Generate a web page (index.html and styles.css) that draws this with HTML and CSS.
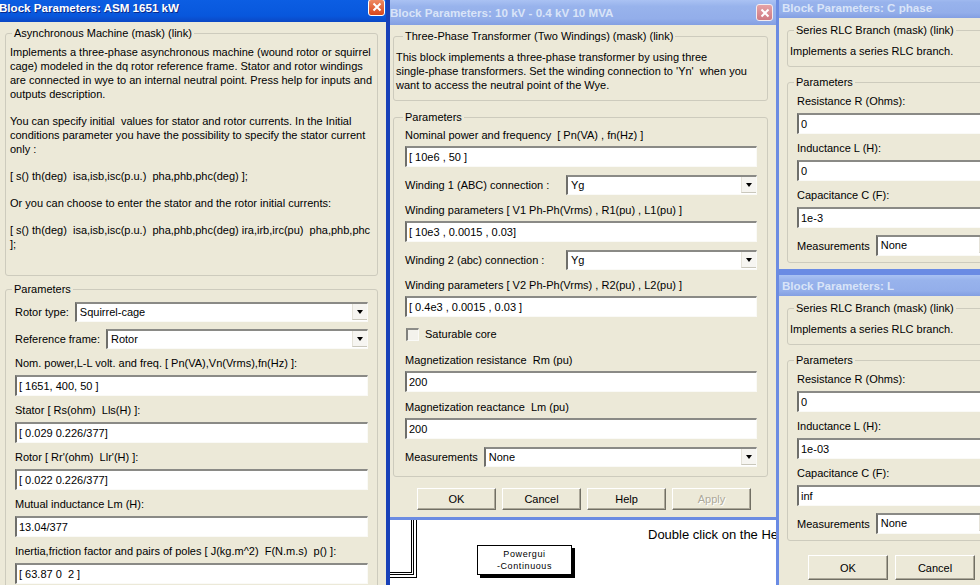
FILE: index.html
```html
<!DOCTYPE html>
<html lang="en">
<head>
    <meta charset="UTF-8">
    <title>Block Parameters</title>
    <link rel="stylesheet" href="styles.css">
</head>
<body>
<div class="desktop">

    <!-- simulink model behind the dialogs -->
    <div class="canvas">
        <div class="subsys"></div>
        <div class="note">Double click on the He</div>
        <div class="powergui">Powergui<br>-Continuous</div>
    </div>

    <!-- Series RLC: C phase -->
    <div class="win win-rlc win-c">
        <div class="titlebar">
            <span class="title">Block Parameters: C phase</span>
        </div>
        <div class="win-body">
            <div class="group group-mask">
                <div class="group-title">Series RLC Branch (mask) (link)</div>
                <p class="desc">Implements a series RLC branch.</p>
            </div>
            <div class="group group-params">
                <div class="group-title">Parameters</div>
                <div class="form">
                    <div class="field">
                        <label>Resistance R (Ohms):</label>
                        <div class="edit">0</div>
                    </div>
                    <div class="field">
                        <label>Inductance L (H):</label>
                        <div class="edit">0</div>
                    </div>
                    <div class="field">
                        <label>Capacitance C (F):</label>
                        <div class="edit">1e-3</div>
                    </div>
                    <div class="row">
                        <label>Measurements</label>
                        <div class="combo"><span>None</span><i class="drop"></i></div>
                    </div>
                </div>
            </div>
        </div>
    </div>

    <!-- Series RLC: L -->
    <div class="win win-rlc win-l">
        <div class="titlebar">
            <span class="title">Block Parameters: L</span>
        </div>
        <div class="win-body">
            <div class="group group-mask">
                <div class="group-title">Series RLC Branch (mask) (link)</div>
                <p class="desc">Implements a series RLC branch.</p>
            </div>
            <div class="group group-params">
                <div class="group-title">Parameters</div>
                <div class="form">
                    <div class="field">
                        <label>Resistance R (Ohms):</label>
                        <div class="edit">0</div>
                    </div>
                    <div class="field">
                        <label>Inductance L (H):</label>
                        <div class="edit">1e-03</div>
                    </div>
                    <div class="field">
                        <label>Capacitance C (F):</label>
                        <div class="edit">inf</div>
                    </div>
                    <div class="row">
                        <label>Measurements</label>
                        <div class="combo"><span>None</span><i class="drop"></i></div>
                    </div>
                </div>
            </div>
            <div class="buttons">
                <button class="btn">OK</button>
                <button class="btn">Cancel</button>
            </div>
        </div>
    </div>

    <!-- Three-phase transformer -->
    <div class="win win-tr">
        <div class="titlebar">
            <span class="title">Block Parameters: 10 kV - 0.4 kV 10 MVA</span>
            <span class="close">
                <svg width="10" height="10" viewBox="0 0 10 10"><path d="M1.5 1.5 L8.5 8.5 M8.5 1.5 L1.5 8.5" stroke="#fff" stroke-width="2"/></svg>
            </span>
        </div>
        <div class="win-body">
            <div class="group group-mask">
                <div class="group-title">Three-Phase Transformer (Two Windings) (mask) (link)</div>
                <p class="desc">This block implements a three-phase transformer by using three<br>single-phase transformers. Set the winding connection to 'Yn'&nbsp; when you<br>want to access the neutral point of the Wye.</p>
            </div>
            <div class="group group-params">
                <div class="group-title">Parameters</div>
                <div class="form">
                    <div class="field">
                        <label>Nominal power and frequency&nbsp; [ Pn(VA) , fn(Hz) ]</label>
                        <div class="edit">[ 10e6 , 50 ]</div>
                    </div>
                    <div class="row">
                        <label class="wide">Winding 1 (ABC) connection :</label>
                        <div class="combo"><span>Yg</span><i class="drop"></i></div>
                    </div>
                    <div class="field">
                        <label>Winding parameters [ V1 Ph-Ph(Vrms) , R1(pu) , L1(pu) ]</label>
                        <div class="edit">[ 10e3 , 0.0015 , 0.03]</div>
                    </div>
                    <div class="row">
                        <label class="wide">Winding 2 (abc) connection :</label>
                        <div class="combo"><span>Yg</span><i class="drop"></i></div>
                    </div>
                    <div class="field">
                        <label>Winding parameters [ V2 Ph-Ph(Vrms) , R2(pu) , L2(pu) ]</label>
                        <div class="edit">[ 0.4e3 , 0.0015 , 0.03 ]</div>
                    </div>
                    <div class="check">
                        <i class="box"></i>
                        <label>Saturable core</label>
                    </div>
                    <div class="field">
                        <label>Magnetization resistance&nbsp; Rm (pu)</label>
                        <div class="edit">200</div>
                    </div>
                    <div class="field">
                        <label>Magnetization reactance&nbsp; Lm (pu)</label>
                        <div class="edit">200</div>
                    </div>
                    <div class="row">
                        <label>Measurements</label>
                        <div class="combo"><span>None</span><i class="drop"></i></div>
                    </div>
                </div>
            </div>
            <div class="buttons">
                <button class="btn">OK</button>
                <button class="btn">Cancel</button>
                <button class="btn">Help</button>
                <button class="btn" disabled>Apply</button>
            </div>
        </div>
    </div>

    <!-- Asynchronous machine (active, on top) -->
    <div class="win win-asm active">
        <div class="titlebar">
            <span class="title">Block Parameters: ASM 1651 kW</span>
            <span class="close">
                <svg width="10" height="10" viewBox="0 0 10 10"><path d="M1.5 1.5 L8.5 8.5 M8.5 1.5 L1.5 8.5" stroke="#fff" stroke-width="2"/></svg>
            </span>
        </div>
        <div class="win-body">
            <div class="group group-mask">
                <div class="group-title">Asynchronous Machine (mask) (link)</div>
                <p class="desc">Implements a three-phase asynchronous machine (wound rotor or squirrel<br>cage) modeled in the dq rotor reference frame. Stator and rotor windings<br>are connected in wye to an internal neutral point. Press help for inputs and<br>outputs description.</p>
                <p class="desc">You can specify initial&nbsp; values for stator and rotor currents. In the Initial<br>conditions parameter you have the possibility to specify the stator current<br>only :</p>
                <p class="desc">[ s() th(deg)&nbsp; isa,isb,isc(p.u.)&nbsp; pha,phb,phc(deg) ];</p>
                <p class="desc">Or you can choose to enter the stator and the rotor initial currents:</p>
                <p class="desc">[ s() th(deg)&nbsp; isa,isb,isc(p.u.)&nbsp; pha,phb,phc(deg) ira,irb,irc(pu)&nbsp; pha,phb,phc<br>];</p>
            </div>
            <div class="group group-params">
                <div class="group-title">Parameters</div>
                <div class="form">
                    <div class="row">
                        <label>Rotor type:</label>
                        <div class="combo"><span>Squirrel-cage</span><i class="drop"></i></div>
                    </div>
                    <div class="row">
                        <label>Reference frame:</label>
                        <div class="combo"><span>Rotor</span><i class="drop"></i></div>
                    </div>
                    <div class="field">
                        <label>Nom. power,L-L volt. and freq. [ Pn(VA),Vn(Vrms),fn(Hz) ]:</label>
                        <div class="edit">[ 1651, 400, 50 ]</div>
                    </div>
                    <div class="field">
                        <label>Stator [ Rs(ohm)&nbsp; Lls(H) ]:</label>
                        <div class="edit">[ 0.029 0.226/377]</div>
                    </div>
                    <div class="field">
                        <label>Rotor [ Rr'(ohm)&nbsp; Llr'(H) ]:</label>
                        <div class="edit">[ 0.022 0.226/377]</div>
                    </div>
                    <div class="field">
                        <label>Mutual inductance Lm (H):</label>
                        <div class="edit">13.04/377</div>
                    </div>
                    <div class="field">
                        <label>Inertia,friction factor and pairs of poles [ J(kg.m^2)&nbsp; F(N.m.s)&nbsp; p() ]:</label>
                        <div class="edit">[ 63.87 0&nbsp; 2 ]</div>
                    </div>
                </div>
            </div>
        </div>
    </div>

</div>
</body>
</html>
```

FILE: styles.css
```css
body {
    margin: 0;
    font: 11px "Liberation Sans", Arial, sans-serif;
    color: #000;
}
.desktop {
    position: relative;
    width: 980px;
    height: 585px;
    overflow: hidden;
    background: #fff;
}

/* model canvas */
.subsys {
    position: absolute;
    left: 370px;
    top: 480px;
    width: 42px;
    height: 93px;
    box-sizing: border-box;
    border: 1px solid #000;
    background: #fff;
    box-shadow: 1px 1px 0 #fff, 2px 2px 0 #000, 4px 4px 0 #fff, 5px 5px 0 #000;
}
.note {
    position: absolute;
    left: 648px;
    top: 527px;
    font-size: 13px;
    line-height: 16px;
    white-space: nowrap;
}
.powergui {
    position: absolute;
    left: 477px;
    top: 545px;
    width: 95px;
    height: 30px;
    box-sizing: border-box;
    border: 1px solid #000;
    background: #fff;
    box-shadow: 3px 3px 0 #000;
    padding-top: 2px;
    font-size: 9px;
    line-height: 12px;
    letter-spacing: 0.6px;
    text-align: center;
}

/* windows */
.win {
    position: absolute;
    box-sizing: border-box;
    border: 3px solid #7391e4;
    background: #ece9d8;
    display: flex;
    flex-direction: column;
}
.win.active {
    border: 4px solid #0b3cc8;
    border-right-color: #1941b8;
}
.titlebar {
    display: flex;
    align-items: center;
    justify-content: space-between;
    flex-shrink: 0;
    height: 21px;
    padding: 0 3px;
    background: linear-gradient(#aac2f3, #98b3ec 25%, #93aeea 75%, #839fe2);
    color: #d9e4f8;
    font-weight: bold;
    font-size: 11.6px;
    white-space: nowrap;
}
.active .titlebar {
    background: linear-gradient(#3b86f6, #0c5fe4 18%, #0857dc 80%, #0b47c4);
    color: #fff;
    text-shadow: 1px 1px 0 #0a2a8a;
}
.close {
    display: flex;
    align-items: center;
    justify-content: center;
    width: 15px;
    height: 15px;
    border: 1px solid #f4ecef;
    border-radius: 3px;
    background: linear-gradient(#e6a2a6, #cf7a82);
}
.active .close {
    background: linear-gradient(#ee8a62, #d9461c);
    border-color: #fff;
}

.win-body {
    flex: 1;
    display: flex;
    flex-direction: column;
}

/* group boxes */
.group {
    position: relative;
    border: 1px solid #cdcbbd;
    border-radius: 3px;
}
.group-title {
    position: absolute;
    top: -8px;
    left: 6px;
    padding: 0 2px;
    line-height: 14px;
    background: #ece9d8;
    white-space: nowrap;
}
.desc {
    margin: 0;
    line-height: 14px;
    white-space: nowrap;
}
.desc + .desc {
    margin-top: 13px;
}

.form {
    display: flex;
    flex-direction: column;
    gap: 7px;
}
.field label {
    display: block;
    line-height: 14px;
    margin-bottom: 5px;
    white-space: nowrap;
}
.row {
    display: flex;
    align-items: center;
    gap: 6px;
    white-space: nowrap;
}
.edit, .combo {
    box-sizing: border-box;
    height: 21px;
    background: #fff;
    border-style: solid;
    border-width: 2px 1px 1px 2px;
    border-color: #8a8a86 #fafaf7 #fafaf7 #6f6f6b;
    padding: 0 2px;
    line-height: 18px;
    white-space: nowrap;
    overflow: hidden;
}
.combo {
    flex: 1;
    height: 20px;
    display: flex;
    justify-content: space-between;
    line-height: 17px;
    padding-left: 3px;
    padding-right: 0;
}
.drop {
    position: relative;
    flex-shrink: 0;
    width: 15px;
    height: 16px;
    box-sizing: border-box;
    background: #f6f5f1;
    border-left: 1px solid #e4e2d8;
    border-bottom: 1px solid #c9c7bb;
}
.drop:after {
    content: "";
    position: absolute;
    left: 4px;
    top: 6px;
    border-top: 4px solid #000;
    border-left: 3.5px solid transparent;
    border-right: 3.5px solid transparent;
}
.check {
    display: flex;
    align-items: center;
    gap: 6px;
    padding: 2px 0 4px 1px;
    line-height: 14px;
}
.check .box {
    width: 13px;
    height: 13px;
    box-sizing: border-box;
    border-style: solid;
    border-width: 2px 1px 1px 2px;
    border-color: #8c8c88 #fafaf7 #fafaf7 #80807c;
    background: #f3f2ec;
}

.buttons {
    display: flex;
    gap: 6px;
}
.btn {
    box-sizing: border-box;
    width: 79px;
    height: 22px;
    padding: 0;
    font: 11px "Liberation Sans", Arial, sans-serif;
    color: #000;
    background: #ece9d8;
    border: 1px solid;
    border-color: #fff #716f64 #716f64 #fff;
    box-shadow: inset -1px -1px 0 #aca899;
}
.btn:disabled {
    color: #aca899;
    text-shadow: 1px 1px 0 #fff;
}

/* ASM window */
.win-asm {
    left: -8px;
    top: -12px;
    width: 398px;
    height: 620px;
}
.win-asm .titlebar {
    height: 30px;
    padding: 0 1px 0 3px;
}
.win-asm .win-body {
    padding: 11px 8px 0 9px;
}
.win-asm .group-mask {
    padding: 11px 4px 24px 4px;
}
.win-asm .group-params {
    margin-top: 13px;
    padding: 12px 9px 10px 9px;
}

/* transformer window */
.win-tr {
    left: 380px;
    top: -3px;
    width: 399px;
    height: 523px;
    border-color: #6c8ce2;
}
.win-tr .titlebar {
    height: 25px;
    padding: 0 3px 0 7px;
}
.win-tr .win-body {
    padding: 11px 8px 0 10px;
}
.win-tr .group-title {
    left: 9px;
}
.win-tr .group-mask {
    padding: 13px 2px 8px 2px;
}
.win-tr .group-params {
    margin-top: 16px;
    padding: 10px 10px 9px 11px;
}
.win-tr .form {
    gap: 8px;
}
.win-tr .field label {
    margin-bottom: 4px;
}
.win-tr .row .wide {
    width: 155px;
}
.win-tr .buttons {
    margin: 11px 0 0 24px;
}

/* series RLC windows */
.win-rlc {
    left: 776px;
    width: 240px;
    border-color: #6a8be4;
}
.win-c {
    top: -6px;
    height: 278px;
}
.win-l {
    top: 272px;
    height: 330px;
}
.win-rlc .win-body {
    padding: 12px 8px 0 8px;
}
.win-rlc .group-mask {
    padding: 13px 2px 8px 2px;
}
.win-rlc .group-params {
    margin-top: 15px;
    padding: 11px 9px 6px 9px;
}
.win-rlc .combo {
    height: 21px;
}
.win-rlc .buttons {
    margin: 14px 0 0 21px;
    gap: 7px;
}
.win-rlc .btn {
    width: 80px;
    height: 25px;
}
```
